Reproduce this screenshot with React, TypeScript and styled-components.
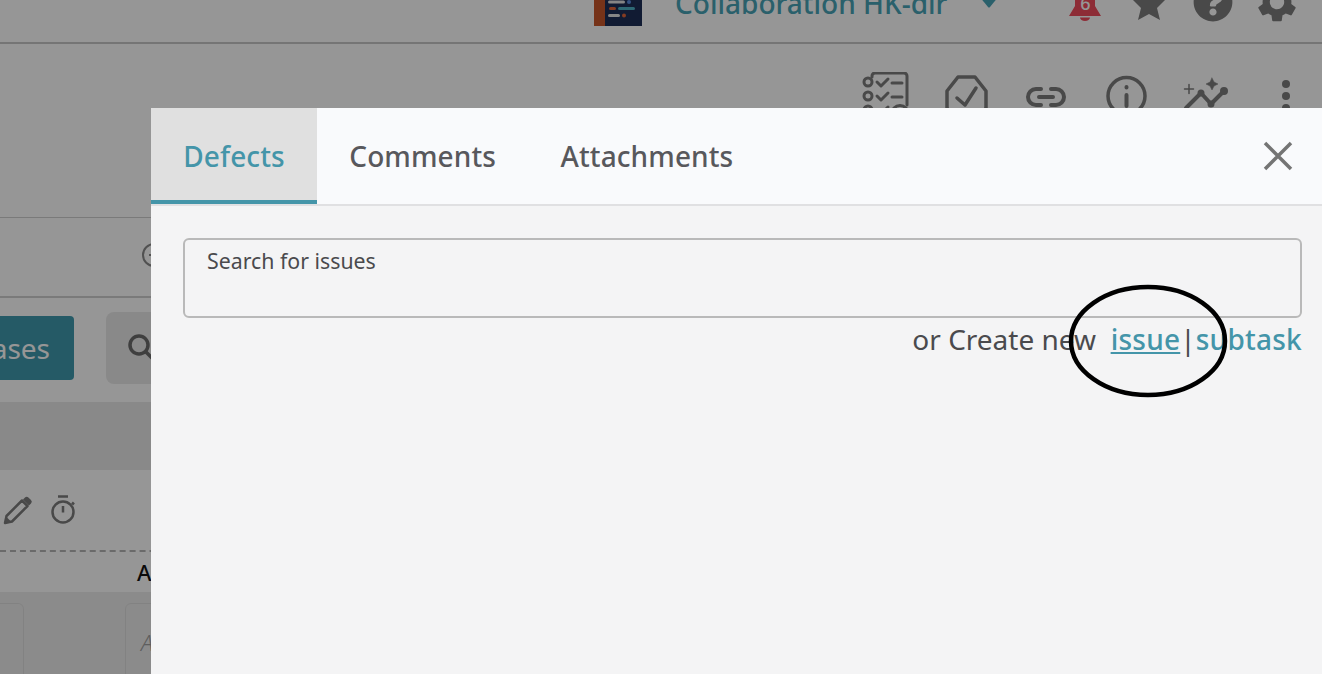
import React from 'react';
import styled, { createGlobalStyle } from 'styled-components';
import { FaQuestionCircle } from 'react-icons/fa';

const GlobalStyle = createGlobalStyle`
  html, body {
    margin: 0;
    padding: 0;
    height: 100%;
    overflow: hidden;
    background: #fff;
    font-family: 'Noto Sans', 'Open Sans', sans-serif;
  }
`;

const Page = styled.div`
  position: relative;
  width: 1322px;
  height: 674px;
  overflow: hidden;
  background: #fff;
`;

const TopBar = styled.header`
  height: 42px;
  border-bottom: 2px solid #c8c8c8;
  display: flex;
  align-items: flex-end;
  padding-left: 594px;
  overflow: hidden;
`;

const ProjectLogo = styled.svg`
  flex: none;
  width: 48px;
  height: 48px;
  margin-bottom: 16px;
`;

const ProjectName = styled.span`
  flex: none;
  margin: 0 0 21px 33px;
  font-size: 28px;
  line-height: 36px;
  font-weight: 500;
  color: #48a3b7;
  white-space: nowrap;
`;

const Caret = styled.svg`
  flex: none;
  width: 20px;
  height: 12px;
  margin: 0 0 34px 32px;
`;

const BellWrap = styled.div`
  flex: none;
  position: relative;
  width: 32px;
  height: 36px;
  margin: 0 0 21px 70px;
`;

const BellCount = styled.span`
  position: absolute;
  left: 0;
  right: 0;
  top: 10px;
  text-align: center;
  font-size: 18px;
  line-height: 16px;
  font-weight: 500;
  color: #fff;
`;

const Star = styled.svg`
  flex: none;
  width: 34px;
  height: 34px;
  margin: 0 0 22px 31px;
  color: #7c7c7c;
`;

const HelpIcon = styled(FaQuestionCircle)`
  flex: none;
  width: 40px;
  height: 40px;
  margin: 0 0 20px 27px;
  color: #7c7c7c;
`;

const Gear = styled.svg`
  flex: none;
  width: 40px;
  height: 40px;
  margin: 0 0 20px 24px;
  color: #7c7c7c;
`;

const ActionRow = styled.div`
  height: 174px;
  border-bottom: 1px solid #cfcfcf;
  box-sizing: border-box;
  display: flex;
  justify-content: flex-end;
  gap: 32px;
  padding: 28px 12px 0 0;
`;

const ActionIcon = styled.svg`
  width: 48px;
  height: 48px;
  color: #7c7c7c;
  display: block;
  fill: none;
  stroke: currentColor;
  stroke-linecap: round;
  stroke-linejoin: round;
`;

const InfoRow = styled.div`
  height: 80px;
  border-bottom: 2px solid #cfcfcf;
  padding: 0 0 4px 141px;
  display: flex;
  align-items: center;
  box-sizing: border-box;
`;

const MinusCircle = styled.svg`
  width: 26px;
  height: 26px;
  color: #8a8a8a;
`;

const SearchRow = styled.div`
  height: 104px;
  padding-bottom: 4px;
  box-sizing: border-box;
  display: flex;
  align-items: center;
  gap: 32px;
`;

const PrimaryButton = styled.div`
  flex: none;
  width: 74px;
  height: 64px;
  background: #3f9aae;
  border-radius: 0 4px 4px 0;
  color: #fff;
  font-size: 28px;
  line-height: 64px;
  padding-right: 24px;
  box-sizing: border-box;
  display: flex;
  justify-content: flex-end;
  overflow: hidden;
  white-space: nowrap;
`;

const SearchBox = styled.div`
  width: 200px;
  height: 72px;
  border-radius: 8px;
  background: #e9e9e9;
  padding: 21px;
  box-sizing: border-box;
`;

const SearchGlyph = styled.svg`
  width: 30px;
  height: 30px;
  color: #6b6b6b;
  display: block;
`;

const TableHead = styled.div`
  height: 68px;
  background: #e9e9e9;
`;

const TaskRow = styled.div`
  height: 82px;
  border-bottom: 2px dashed #b4b4b4;
  box-sizing: border-box;
  display: flex;
  align-items: center;
  gap: 12px;
  padding: 0 0 0 3px;
`;

const TaskIcon = styled.svg`
  width: 32px;
  height: 32px;
  color: #7c7c7c;
`;

const LabelRow = styled.div`
  height: 40px;
  background: #fff;
  padding-left: 137px;
  font-size: 22px;
  line-height: 41px;
  font-weight: 500;
  color: #111;
`;

const FieldRow = styled.div`
  height: 82px;
  background: #ededed;
  display: flex;
  padding-top: 11px;
  box-sizing: border-box;
  gap: 101px;
`;

const FieldBox = styled.div<{ $cut?: boolean }>`
  flex: none;
  width: ${(p) => (p.$cut ? '24px' : '160px')};
  height: 80px;
  border: 1px solid #dedede;
  border-left-width: ${(p) => (p.$cut ? 0 : '1px')};
  border-radius: ${(p) => (p.$cut ? '0 6px 6px 0' : '6px')};
  padding: ${(p) => (p.$cut ? 0 : '23px 15px')};
  box-sizing: border-box;
  font-style: italic;
  font-weight: 300;
  font-size: 22px;
  line-height: 30px;
  color: #a0a0a0;
`;

const Dim = styled.div`
  position: absolute;
  inset: 0;
  background: rgba(0, 0, 0, 0.41);
`;

const Modal = styled.div`
  position: absolute;
  left: 151px;
  top: 108px;
  width: 1171px;
  height: 566px;
  background: #f4f4f5;
  border-top-left-radius: 2px;
  display: flex;
  flex-direction: column;
`;

const TabBar = styled.div`
  height: 98px;
  box-sizing: border-box;
  background: #f9fafc;
  border-bottom: 2px solid #e0e0e2;
  display: flex;
  position: relative;
`;

const Tab = styled.div<{ $active?: boolean }>`
  height: 96px;
  padding: 0 32.3px;
  box-sizing: border-box;
  font-size: 28px;
  letter-spacing: 0.1px;
  font-weight: 500;
  line-height: 96px;
  color: ${(p) => (p.$active ? '#4495a9' : '#58585c')};
  background: ${(p) => (p.$active ? '#e0e0e0' : 'transparent')};
  border-bottom: ${(p) => (p.$active ? '4px solid #4495a9' : 'none')};
`;

const CloseIcon = styled.svg`
  position: absolute;
  right: 28px;
  top: 32px;
  width: 32px;
  height: 32px;
  color: #747474;
`;

const Body = styled.div`
  padding: 32px 20px 0 32px;
  display: flex;
  flex-direction: column;
`;

const SearchField = styled.div`
  height: 80px;
  border: 2px solid #b9b9b9;
  border-radius: 6px;
  box-sizing: border-box;
  padding: 7px 22px;
  font-size: 21.3px;
  line-height: 28px;
  color: #4a4a4d;
`;

const CreateRow = styled.div`
  display: flex;
  justify-content: flex-end;
  align-items: baseline;
  font-size: 28px;
  line-height: 42px;
  color: #4a4a4d;
  white-space: pre;
`;

const IssueLink = styled.a<{ $underline?: boolean }>`
  color: #4495a9;
  font-weight: 500;
  letter-spacing: 0.25px;
  text-decoration: ${(p) => (p.$underline ? 'underline' : 'none')};
`;

const Annotation = styled.svg`
  position: absolute;
  left: 1066px;
  top: 282px;
  width: 164px;
  height: 118px;
`;

const GEAR_PATH =
  'M19.14 12.94c.04-.3.06-.61.06-.94 0-.32-.02-.64-.07-.94l2.03-1.58a.49.49 0 0 0 .12-.61l-1.92-3.32a.488.488 0 0 0-.59-.22l-2.39.96c-.5-.38-1.03-.7-1.62-.94l-.36-2.54a.484.484 0 0 0-.48-.41h-3.84c-.24 0-.43.17-.47.41l-.36 2.54c-.59.24-1.13.57-1.62.94l-2.39-.96c-.22-.08-.47 0-.59.22L2.74 8.87c-.12.21-.08.47.12.61l2.03 1.58c-.05.3-.09.63-.09.94s.02.64.07.94l-2.03 1.58a.49.49 0 0 0-.12.61l1.92 3.32c.12.22.37.29.59.22l2.39-.96c.5.38 1.03.7 1.62.94l.36 2.54c.05.24.24.41.48.41h3.84c.24 0 .44-.17.47-.41l.36-2.54c.59-.24 1.13-.56 1.62-.94l2.39.96c.22.08.47 0 .59-.22l1.92-3.32c.12-.22.07-.47-.12-.61l-2.01-1.58zM12 15.6c-1.98 0-3.6-1.62-3.6-3.6s1.62-3.6 3.6-3.6 3.6 1.62 3.6 3.6-1.62 3.6-3.6 3.6z';

export default function App() {
  return (
    <Page>
      <GlobalStyle />
      <TopBar>
        <ProjectLogo viewBox="0 0 48 48">
          <rect width="48" height="48" fill="#1e2f57" />
          <rect width="11" height="48" fill="#c9572c" />
          <rect x="14" y="16" width="16" height="3" rx="1.5" fill="#e4e4e4" />
          <rect x="14" y="22.5" width="17" height="3" rx="1.5" fill="#e4e4e4" />
          <circle cx="35" cy="24" r="2" fill="#5b8ee0" />
          <rect x="15" y="29" width="7" height="3" rx="1.5" fill="#e0653a" />
          <rect x="24" y="29" width="17" height="3" rx="1.5" fill="#4fb3c8" />
          <rect x="14" y="36" width="12" height="3" rx="1.5" fill="#e4e4e4" />
          <circle cx="30" cy="37.5" r="2" fill="#e0653a" />
        </ProjectLogo>
        <ProjectName>Collaboration HK-dir</ProjectName>
        <Caret viewBox="0 0 20 12">
          <path d="M0 0h20L11 11a1.4 1.4 0 0 1-2 0z" fill="#48a3b7" />
        </Caret>
        <BellWrap>
          <svg width="32" height="36" viewBox="0 0 32 36">
            <path d="M16 0C8 0 6 7 6 14v7L0 31h32l-6-10v-7C26 7 24 0 16 0z" fill="#f04b5c" />
            <path d="M11 32.5h10a5 3.5 0 0 1-10 0z" fill="#f04b5c" />
          </svg>
          <BellCount>6</BellCount>
        </BellWrap>
        <Star viewBox="0 0 34 34">
          <path d="M17 0l4.5 11.5L34 13l-9 9 3 12-11-6-11 6 3-12-9-9 12.5-1.5z" fill="currentColor" />
        </Star>
        <HelpIcon />
        <Gear viewBox="2 2 20 20">
          <path d={GEAR_PATH} fill="currentColor" />
        </Gear>
      </TopBar>
      <ActionRow>
        <ActionIcon viewBox="0 0 48 48" strokeWidth="3">
          <path d="M10 5V4a3 3 0 0 1 3-3h29a3 3 0 0 1 3 3v29" />
          <circle cx="6" cy="10" r="4" />
          <circle cx="6" cy="24" r="4" />
          <circle cx="6" cy="38" r="4" />
          <path d="M15 10l4 4 7-7M30 11h10M15 24l4 4 7-7M30 25h10M15 38l4 4 7-7" />
          <circle cx="38" cy="42" r="8.5" />
        </ActionIcon>
        <ActionIcon viewBox="0 0 48 48" strokeWidth="3.5">
          <path d="M16 5h17l11 14v17L33 50H16L5 36V19z" />
          <path d="M15 26l8 7 11-17" />
        </ActionIcon>
        <ActionIcon viewBox="0 0 48 48" strokeWidth="4">
          <path d="M19 17h-5a8 8 0 0 0 0 16h5M29 17h5a8 8 0 0 1 0 16h-5M17 25h14" />
        </ActionIcon>
        <ActionIcon viewBox="0 0 48 48" strokeWidth="3.5">
          <circle cx="24.5" cy="24" r="18.5" />
          <path d="M24.5 23v11M24.5 15v.5" strokeWidth="4" />
        </ActionIcon>
        <ActionIcon viewBox="0 0 48 48" strokeWidth="4">
          <path d="M4 36l15-15 10 11 13-13" />
          <circle cx="19" cy="21" r="1.5" />
          <circle cx="29" cy="32" r="1.5" />
          <circle cx="42" cy="19" r="2" />
          <path d="M30 6l2 4 4 2-4 2-2 4-2-4-4-2 4-2z" fill="currentColor" strokeWidth="0.5" />
          <path d="M7 12.5v9M2.5 17h9" strokeWidth="1.5" />
        </ActionIcon>
        <ActionIcon viewBox="0 0 48 48" stroke="none">
          <circle cx="24" cy="12" r="4" fill="currentColor" stroke="none" />
          <circle cx="24" cy="24" r="4" fill="currentColor" stroke="none" />
          <circle cx="24" cy="36" r="4" fill="currentColor" stroke="none" />
        </ActionIcon>
      </ActionRow>
      <InfoRow>
        <MinusCircle viewBox="0 0 26 26">
          <circle cx="13" cy="13" r="11" fill="none" stroke="currentColor" strokeWidth="2" />
          <path d="M8 13h10" stroke="currentColor" strokeWidth="2" />
        </MinusCircle>
      </InfoRow>
      <SearchRow>
        <PrimaryButton>ases</PrimaryButton>
        <SearchBox>
          <SearchGlyph viewBox="0 0 30 30">
            <circle cx="12" cy="12" r="9" fill="none" stroke="currentColor" strokeWidth="3.5" />
            <path d="M19 19l9 9" stroke="currentColor" strokeWidth="3.5" />
          </SearchGlyph>
        </SearchBox>
      </SearchRow>
      <TableHead />
      <TaskRow>
        <TaskIcon viewBox="0 0 32 32">
          <path d="M2 29l1.5-7L19 6.5l5.5 5.5L9 27.5z" fill="none" stroke="currentColor" strokeWidth="2.5" strokeLinejoin="round" />
          <path d="M22 3.5a2.4 2.4 0 0 1 3.4 0l2.6 2.6a2.4 2.4 0 0 1 0 3.4l-2 2L20 5.5z" fill="currentColor" />
          <path d="M2 29l1.5-6 4.5 4.5z" fill="currentColor" />
        </TaskIcon>
        <TaskIcon viewBox="0 0 32 32">
          <circle cx="16" cy="18" r="10.5" fill="none" stroke="currentColor" strokeWidth="2.5" />
          <path d="M11 2.5h10M16 12v6.5M25 8.5l2 2" stroke="currentColor" strokeWidth="2.5" fill="none" />
        </TaskIcon>
      </TaskRow>
      <LabelRow>A</LabelRow>
      <FieldRow>
        <FieldBox $cut />
        <FieldBox>A</FieldBox>
      </FieldRow>
      <Dim />
      <Modal>
        <TabBar>
          <Tab $active>Defects</Tab>
          <Tab>Comments</Tab>
          <Tab>Attachments</Tab>
          <CloseIcon viewBox="0 0 32 32">
            <path d="M3 3l26 26M29 3L3 29" stroke="currentColor" strokeWidth="3.5" fill="none" />
          </CloseIcon>
        </TabBar>
        <Body>
          <SearchField>Search for issues</SearchField>
          <CreateRow>
            or Create new{'  '}
            <IssueLink $underline>issue</IssueLink>
            {'|'}
            <IssueLink>subtask</IssueLink>
          </CreateRow>
        </Body>
      </Modal>
      <Annotation viewBox="0 0 164 118">
        <ellipse cx="82" cy="59" rx="77" ry="54" fill="none" stroke="#000" strokeWidth="4.5" />
      </Annotation>
    </Page>
  );
}
